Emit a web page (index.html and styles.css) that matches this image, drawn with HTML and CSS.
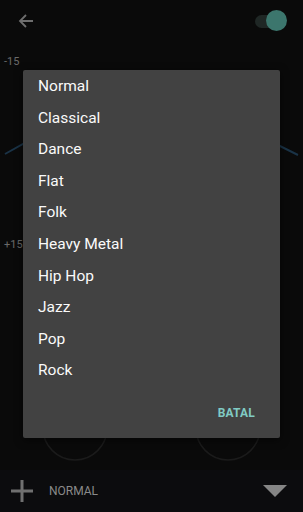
FILE: index.html
```html
<!DOCTYPE html>
<html>
<head>
<meta charset="utf-8">
<link rel="stylesheet" href="styles.css">
</head>
<body>
<div class="screen">
  <header class="toolbar">
    <svg class="back" viewBox="0 0 16 16" width="16" height="16"><path d="M15 8H2M8 2L2 8l6 6" fill="none" stroke="#6e6e6e" stroke-width="1.8"/></svg>
    <div class="toggle"><span class="track"></span><span class="thumb"></span></div>
  </header>
  <main class="eq">
    <svg class="graph" viewBox="0 0 303 428" width="303" height="428">
      <polyline points="5,112 23,102 151,96 280,104 298,113" fill="none" stroke="#1a3347" stroke-width="2"/>
      <circle cx="75" cy="386" r="32" fill="none" stroke="#1b1b1b" stroke-width="1.5"/>
      <circle cx="228" cy="386" r="32" fill="none" stroke="#1b1b1b" stroke-width="1.5"/>
    </svg>
    <span class="lbl top">-15</span>
    <span class="lbl bottom">+15</span>
  </main>
  <footer class="bar">
    <svg class="plus" viewBox="0 0 24 24" width="24" height="24"><path d="M12 1v22M1 12h22" stroke="#707070" stroke-width="3"/></svg>
    <span class="preset">NORMAL</span>
    <svg class="tri" viewBox="0 0 24 13" width="24" height="13"><path d="M0 0h24L12 12z" fill="#858585"/></svg>
  </footer>
  <div class="dialog">
    <ul class="list">
      <li>Normal</li>
      <li>Classical</li>
      <li>Dance</li>
      <li>Flat</li>
      <li>Folk</li>
      <li>Heavy Metal</li>
      <li>Hip Hop</li>
      <li>Jazz</li>
      <li>Pop</li>
      <li>Rock</li>
    </ul>
    <div class="actions"><span class="btn">BATAL</span></div>
  </div>
</div>
</body>
</html>
```
FILE: styles.css
```css
* { box-sizing: border-box; }
html, body { margin: 0; padding: 0; }
body { background: #0a0a0a; font-family: Roboto, "Liberation Sans", sans-serif; }
.screen { position: relative; width: 303px; height: 512px; overflow: hidden; background: #0a0a0a; }
.toolbar { height: 42px; display: flex; align-items: center; justify-content: space-between; padding: 0 16px 0 18px; }
.back { display: block; }
.toggle { position: relative; width: 32px; height: 22px; }
.track { position: absolute; left: 0; top: 5px; width: 28px; height: 13px; border-radius: 7px; background: #1f2725; }
.thumb { position: absolute; right: 0; top: 0; width: 21px; height: 21px; border-radius: 50%; background: #3c766d; }
.eq { position: relative; height: 428px; }
.graph { position: absolute; left: 0; top: 0; }
.lbl { position: absolute; left: 4px; font-size: 11px; color: #6a6a6a; line-height: 12px; }
.lbl.top { top: 14px; }
.lbl.bottom { top: 197px; }
.bar { height: 42px; display: flex; align-items: center; padding: 0 16px 0 10px; background: #0c0c0e; }
.plus { display: block; }
.preset { margin-left: 15px; font-size: 12px; color: #8a8a8a; flex: 1; }
.tri { display: block; }
.dialog { position: absolute; left: 23px; top: 70px; width: 257px; height: 368px; background: #424242; border-radius: 2px; box-shadow: 0 2px 8px rgba(0,0,0,0.6); display: flex; flex-direction: column; padding-top: 1px; }
.list { list-style: none; margin: 0; padding: 0; }
.list li { height: 31.6px; line-height: 31.6px; padding-left: 15px; color: #fafafa; font-size: 15.5px; }
.actions { flex: 1; display: flex; align-items: center; justify-content: flex-end; padding: 2px 25px 0 0; }
.btn { color: #80cbc4; font-size: 12px; font-weight: 700; letter-spacing: 0.2px; }
```
